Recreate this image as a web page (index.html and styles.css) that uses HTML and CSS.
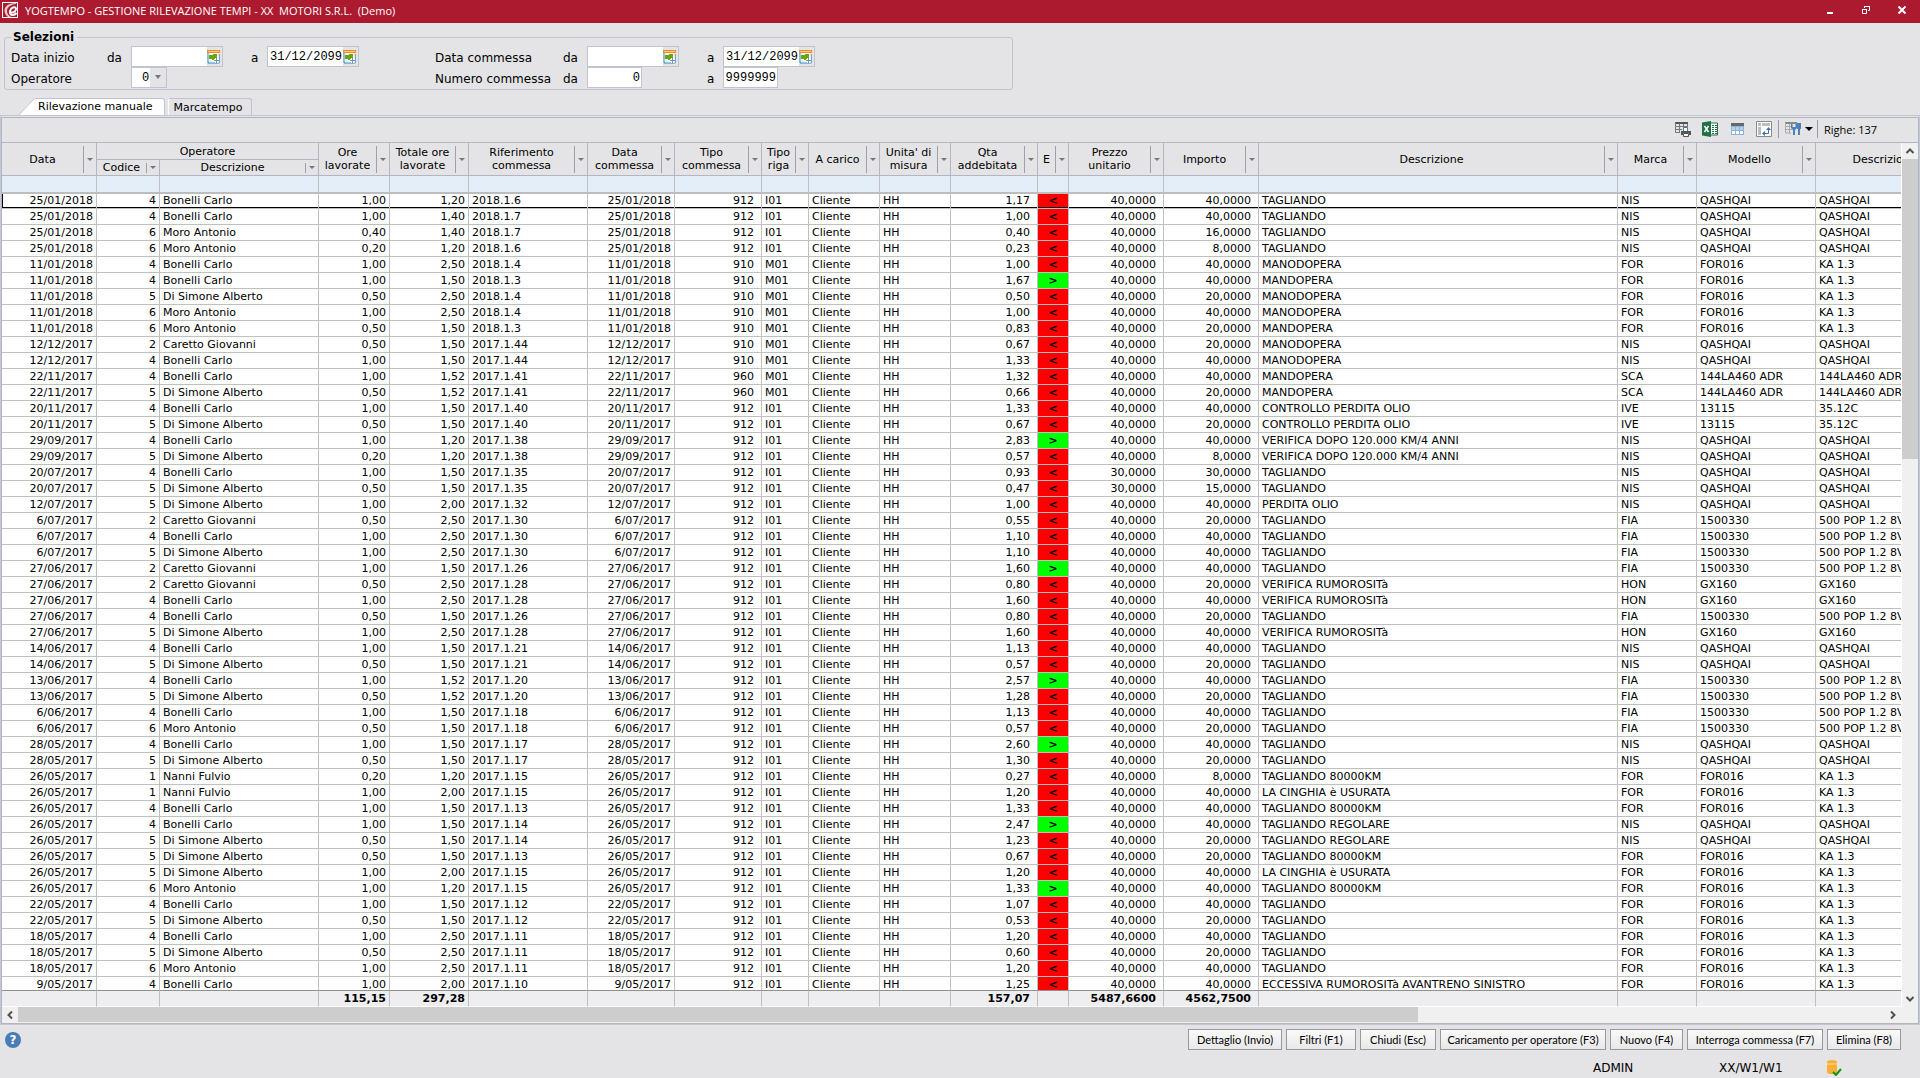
FILE: index.html
```html
<!DOCTYPE html>
<html lang="it">
<head>
    <meta charset="UTF-8">
    <meta name="viewport" content="width=device-width, initial-scale=1.0">
    <title>YOGTEMPO - Gestione rilevazione tempi</title>
    <link rel="stylesheet" href="styles.css">
</head>
<body>
    <svg class="defs" width="0" height="0" aria-hidden="true">
        <symbol id="calendar" viewBox="0 0 13 14">
            <path d="M1 3h10v10H1z" fill="#f4f9fd"/>
            <path d="M1 3v10h10" fill="none" stroke="#2f8fc4" stroke-width="1"/>
            <path d="M12.500 4v9H8" fill="none" stroke="#7fa3c4"/>
            <path d="M0 0h13v3H0z" fill="#f58a1f"/>
            <path d="M1 1h11v1H1z" fill="#fdc68c"/>
            <path d="M2 5h4v4H2zM6 4h4v4H6zM5 8h3v2H5z" fill="#6aa50c"/>
            <path d="M9.500 8v5M7 10.500h5" stroke="#fff" stroke-width="3"/>
            <path d="M9.500 8v5M7 10.500h5" stroke="#6b8fb5"/>
        </symbol>
        <symbol id="chevron" viewBox="0 0 16 16">
            <path d="M4.500 10L8 6.500l3.500 3.500" fill="none" stroke="#505050" stroke-width="2"/>
        </symbol>
    </svg>

    <header class="titlebar">
        <svg class="logo" viewBox="0 0 16 16">
            <path d="M0 0h16v16H0z" fill="#fff"/>
            <path d="M1 1h14v14H1z" fill="#a81c2e"/>
            <path d="M14 1C7 1 2.500 4 2.500 8.500c0 3 1.500 5 3.500 6.500h3C6.500 13.500 5 11.500 5 9c0-4 4-6.500 9-7z" fill="#e8c9cd"/>
            <path d="M8 10.500c4 .5 6.500-2 6-4-.5-1.800-3.500-1.500-5 .5-1.700 2.300-1.500 6 1.500 6 1.500 0 3-.8 4-2" fill="none" stroke="#fff" stroke-width="2"/>
        </svg>
        <h1>YOGTEMPO - GESTIONE RILEVAZIONE TEMPI - XX  MOTORI S.R.L.  (Demo)</h1>
        <div class="window-buttons">
            <button type="button" aria-label="Riduci"><svg viewBox="0 0 10 10"><path d="M2 7h6v2H2z" fill="#fff"/></svg></button>
            <button type="button" aria-label="Ripristina"><svg viewBox="0 0 10 10"><path d="M3.500 3V1.500h5v4H7M1.500 4.500h4v4h-4z" fill="none" stroke="#fff"/><path d="M3 1h6v1H3zM1 4h5v1H1z" fill="#fff"/></svg></button>
            <button type="button" aria-label="Chiudi"><svg viewBox="0 0 10 10"><path d="M1.500 1.500l7 7M8.500 1.500l-7 7" stroke="#fff" stroke-width="2"/></svg></button>
        </div>
    </header>

    <fieldset class="selezioni">
        <legend>Selezioni</legend>
        <div class="campi">
            <span>Data inizio</span>
            <label for="inizioDa">da</label>
            <div class="data"><input id="inizioDa" type="text"><button type="button" aria-label="Calendario"><svg><use href="#calendar"/></svg></button></div>
            <label for="inizioA">a</label>
            <div class="data"><input id="inizioA" type="text" value="31/12/2099"><button type="button" aria-label="Calendario"><svg><use href="#calendar"/></svg></button></div>
            <span>Data commessa</span>
            <label for="commessaDa">da</label>
            <div class="data"><input id="commessaDa" type="text"><button type="button" aria-label="Calendario"><svg><use href="#calendar"/></svg></button></div>
            <label for="commessaA">a</label>
            <div class="data"><input id="commessaA" type="text" value="31/12/2099"><button type="button" aria-label="Calendario"><svg><use href="#calendar"/></svg></button></div>

            <label class="largo" for="operatore">Operatore</label>
            <div class="combo"><select id="operatore"><option>0</option></select></div>
            <span class="vuoto"></span>
            <span>Numero commessa</span>
            <label for="numeroDa">da</label>
            <input class="numero" id="numeroDa" type="text" value="0">
            <label for="numeroA">a</label>
            <input class="numero" id="numeroA" type="text" value="9999999">
        </div>
    </fieldset>

    <nav class="tabs">
        <button type="button" class="tab active"><svg viewBox="0 0 18 18"><path d="M0 18L15 2q1-1.500 3-1.500V18z" fill="#fff"/><path d="M0 18L15 2q1-1.500 3-1.500" fill="none" stroke="#c2c3d2"/></svg><span>Rilevazione manuale</span></button>
        <button type="button" class="tab">Marcatempo</button>
    </nav>

    <main class="pagina">
        <section class="griglia">
            <div class="toolbar">
                <button type="button" aria-label="Stampa">
                    <svg viewBox="0 0 16 16"><path d="M0 1h13v2H0z" fill="#555"/><path d="M.5 1.500v10H5M.5 5.500h12M.5 8.500H7M4.500 3v9M8.500 3v4M12.500 3v3" fill="none" stroke="#777"/><path d="M8.500 6.500h4v4h-4z" fill="#fff" stroke="#4a78ab"/><path d="M6 10h10v4h-2v-2H8v2H6z" fill="#555"/><path d="M8.500 12.500h5v3h-5z" fill="#fff" stroke="#555"/></svg>
                </button>
                <button type="button" aria-label="Esporta in Excel">
                    <svg viewBox="0 0 16 16"><path d="M8 2h7.500v12H8z" fill="#fff" stroke="#1f7244"/><path d="M10 4h2v1h-2zM13 4h2v1h-2zM10 6h2v1h-2zM13 6h2v1h-2zM10 8h2v1h-2zM13 8h2v1h-2zM10 10h2v1h-2zM13 10h2v1h-2zM10 12h2v1h-2zM13 12h2v1h-2z" fill="#1f7244"/><path d="M0 1.500L9 0v16l-9-1.500z" fill="#1f7244"/><path d="M2.500 5l4 6M6.500 5l-4 6" stroke="#fff" stroke-width="1.500"/></svg>
                </button>
                <button type="button" aria-label="Tabella">
                    <svg viewBox="0 0 16 16"><path d="M2 2h13v12H2z" fill="#8db4d8"/><path d="M2 2h13v3H2z" fill="#666"/><path d="M3 6h3v3H3zM7 6h3v3H7zM11 6h3v3h-3zM3 10h3v3H3zM7 10h3v3H7zM11 10h3v3h-3z" fill="#fff"/><path d="M3 6h3v3H3zM7 6h3v3H7zM11 6h3v3h-3z" fill="#b5d2ec"/></svg>
                </button>
                <button type="button" aria-label="Pivot">
                    <svg viewBox="0 0 16 16"><path d="M.5 .5h15v15H.5z" fill="#fff" stroke="#8a8a8a"/><path d="M2 2h3v3H2zM6 2h8v3H6zM2 6h3v8H2z" fill="#bdbdbd"/><path d="M7 12.500h5.500V7" fill="none" stroke="#3a74b4"/><path d="M10 9l2.500-3L15 9zM9 10l-3 2.500L9 15z" fill="#3a74b4"/></svg>
                </button>
                <span class="sep"></span>
                <button type="button" class="menu" aria-label="Impostazioni">
                    <svg viewBox="0 0 16 16"><path d="M0 1h12v2H0z" fill="#888"/><path d="M.5 2v10H6M0 5.500h7M0 8.500h7M4.500 3v9" fill="none" stroke="#aaa"/><path d="M6 3v4l2 2v5h2V9l2-2V3h-1.500v3h-3V3z" fill="#4a80bb"/><path d="M12 2h4v6h-1v6h-2V8h-1z" fill="#4a80bb"/></svg>
                    <i class="freccia"></i>
                </button>
                <span class="sep"></span>
                <span class="righe">Righe: 137</span>
            </div>

            <div class="corpo">
                <div class="scorri">
                    <table>
                        <colgroup>
                            <col class="w95"><col class="w63"><col class="w159"><col class="w71"><col class="w79">
                            <col class="w119"><col class="w87"><col class="w87"><col class="w47"><col class="w71">
                            <col class="w71"><col class="w87"><col class="w31"><col class="w95"><col class="w95">
                            <col class="w359"><col class="w79"><col class="w119"><col class="w151">
                        </colgroup>
                        <thead>
                            <tr>
                                <th rowspan="2"><div class="th"><span>Data</span><button type="button" aria-label="Filtra"></button></div></th>
                                <th colspan="2" class="gruppo">Operatore</th>
                                <th rowspan="2"><div class="th"><span>Ore<br>lavorate</span><button type="button" aria-label="Filtra"></button></div></th>
                                <th rowspan="2"><div class="th"><span>Totale ore<br>lavorate</span><button type="button" aria-label="Filtra"></button></div></th>
                                <th rowspan="2"><div class="th"><span>Riferimento<br>commessa</span><button type="button" aria-label="Filtra"></button></div></th>
                                <th rowspan="2"><div class="th"><span>Data<br>commessa</span><button type="button" aria-label="Filtra"></button></div></th>
                                <th rowspan="2"><div class="th"><span>Tipo<br>commessa</span><button type="button" aria-label="Filtra"></button></div></th>
                                <th rowspan="2"><div class="th"><span>Tipo<br>riga</span><button type="button" aria-label="Filtra"></button></div></th>
                                <th rowspan="2"><div class="th"><span>A carico</span><button type="button" aria-label="Filtra"></button></div></th>
                                <th rowspan="2"><div class="th"><span>Unita' di<br>misura</span><button type="button" aria-label="Filtra"></button></div></th>
                                <th rowspan="2"><div class="th"><span>Qta<br>addebitata</span><button type="button" aria-label="Filtra"></button></div></th>
                                <th rowspan="2"><div class="th"><span>E</span><button type="button" aria-label="Filtra"></button></div></th>
                                <th rowspan="2"><div class="th"><span>Prezzo<br>unitario</span><button type="button" aria-label="Filtra"></button></div></th>
                                <th rowspan="2"><div class="th"><span>Importo</span><button type="button" aria-label="Filtra"></button></div></th>
                                <th rowspan="2"><div class="th"><span>Descrizione</span><button type="button" aria-label="Filtra"></button></div></th>
                                <th rowspan="2"><div class="th"><span>Marca</span><button type="button" aria-label="Filtra"></button></div></th>
                                <th rowspan="2"><div class="th"><span>Modello</span><button type="button" aria-label="Filtra"></button></div></th>
                                <th rowspan="2"><div class="th"><span>Descrizione</span><button type="button" aria-label="Filtra"></button></div></th>
                            </tr>
                            <tr>
                                <th><div class="th basso"><span>Codice</span><button type="button" aria-label="Filtra"></button></div></th>
                                <th><div class="th basso"><span>Descrizione</span><button type="button" aria-label="Filtra"></button></div></th>
                            </tr>
                            <tr class="filtri">
                                <td></td><td></td><td></td><td></td><td></td><td></td><td></td><td></td><td></td><td></td>
                                <td></td><td></td><td></td><td></td><td></td><td></td><td></td><td></td><td></td>
                            </tr>
                        </thead>
                        <tbody id="righe"></tbody>
                        <tfoot>
                            <tr>
                                <td></td><td></td><td></td>
                                <td class="num">115,15</td>
                                <td class="num">297,28</td>
                                <td></td><td></td><td></td><td></td><td></td><td></td>
                                <td class="num7">157,07</td>
                                <td></td>
                                <td class="num7">5487,6600</td>
                                <td class="num7">4562,7500</td>
                                <td></td><td></td><td></td><td></td>
                            </tr>
                        </tfoot>
                    </table>
                </div>
                <div class="barra-v">
                    <button type="button" aria-label="Su"><svg><use href="#chevron"/></svg></button>
                    <div class="binario"><div class="cursore"></div></div>
                    <button type="button" class="giu" aria-label="Giù"><svg><use href="#chevron"/></svg></button>
                </div>
            </div>
            <div class="barra-o">
                <button type="button" class="sinistra" aria-label="Sinistra"><svg><use href="#chevron"/></svg></button>
                <div class="binario"><div class="cursore"></div></div>
                <button type="button" class="destra" aria-label="Destra"><svg><use href="#chevron"/></svg></button>
            </div>
        </section>
    </main>

    <footer>
        <div class="comandi">
            <button type="button" class="aiuto" aria-label="Aiuto">?</button>
            <div class="bottoni">
                <button type="button">Dettaglio (Invio)</button>
                <button type="button">Filtri (F1)</button>
                <button type="button">Chiudi (Esc)</button>
                <button type="button">Caricamento per operatore (F3)</button>
                <button type="button">Nuovo (F4)</button>
                <button type="button">Interroga commessa (F7)</button>
                <button type="button">Elimina (F8)</button>
            </div>
        </div>
        <div class="stato">
            <span>ADMIN</span>
            <span>XX/W1/W1</span>
            <svg viewBox="0 0 16 16"><path d="M1 2q0-2 5-2t5 2v10q0 2-5 2t-5-2z" fill="#fbb034"/><path d="M1 4h10" stroke="#fde0a8"/><path d="M7 12l3 3 5-6" fill="none" stroke="#12960f" stroke-width="2"/></svg>
        </div>
    </footer>

    <script>
        const operatori = {
            1: "Nanni Fulvio",
            2: "Caretto Giovanni",
            4: "Bonelli Carlo",
            5: "Di Simone Alberto",
            6: "Moro Antonio"
        };
        const veicoli = {
            QASHQAI: ["NIS", "QASHQAI", "QASHQAI"],
            KA: ["FOR", "FOR016", "KA 1.3"],
            SCANIA: ["SCA", "144LA460 ADR", "144LA460 ADR"],
            IVECO: ["IVE", "13115", "35.12C"],
            FIAT: ["FIA", "1500330", "500 POP 1.2 8V"],
            HONDA: ["HON", "GX160", "GX160"]
        };
        // data, operatore, ore, totale, riferimento, tipo, riga, qta, esito, prezzo, importo, descrizione, veicolo
        const dati = `
25/01/2018|4|1,00|1,20|2018.1.6|912|I01|1,17|<|40|40|TAGLIANDO|QASHQAI
25/01/2018|4|1,00|1,40|2018.1.7|912|I01|1,00|<|40|40|TAGLIANDO|QASHQAI
25/01/2018|6|0,40|1,40|2018.1.7|912|I01|0,40|<|40|16|TAGLIANDO|QASHQAI
25/01/2018|6|0,20|1,20|2018.1.6|912|I01|0,23|<|40|8|TAGLIANDO|QASHQAI
11/01/2018|4|1,00|2,50|2018.1.4|910|M01|1,00|<|40|40|MANODOPERA|KA
11/01/2018|4|1,00|1,50|2018.1.3|910|M01|1,67|>|40|40|MANDOPERA|KA
11/01/2018|5|0,50|2,50|2018.1.4|910|M01|0,50|<|40|20|MANODOPERA|KA
11/01/2018|6|1,00|2,50|2018.1.4|910|M01|1,00|<|40|40|MANODOPERA|KA
11/01/2018|6|0,50|1,50|2018.1.3|910|M01|0,83|<|40|20|MANDOPERA|KA
12/12/2017|2|0,50|1,50|2017.1.44|910|M01|0,67|<|40|20|MANODOPERA|QASHQAI
12/12/2017|4|1,00|1,50|2017.1.44|910|M01|1,33|<|40|40|MANODOPERA|QASHQAI
22/11/2017|4|1,00|1,52|2017.1.41|960|M01|1,32|<|40|40|MANDOPERA|SCANIA
22/11/2017|5|0,50|1,52|2017.1.41|960|M01|0,66|<|40|20|MANDOPERA|SCANIA
20/11/2017|4|1,00|1,50|2017.1.40|912|I01|1,33|<|40|40|CONTROLLO PERDITA OLIO|IVECO
20/11/2017|5|0,50|1,50|2017.1.40|912|I01|0,67|<|40|20|CONTROLLO PERDITA OLIO|IVECO
29/09/2017|4|1,00|1,20|2017.1.38|912|I01|2,83|>|40|40|VERIFICA DOPO 120.000 KM/4 ANNI|QASHQAI
29/09/2017|5|0,20|1,20|2017.1.38|912|I01|0,57|<|40|8|VERIFICA DOPO 120.000 KM/4 ANNI|QASHQAI
20/07/2017|4|1,00|1,50|2017.1.35|912|I01|0,93|<|30|30|TAGLIANDO|QASHQAI
20/07/2017|5|0,50|1,50|2017.1.35|912|I01|0,47|<|30|15|TAGLIANDO|QASHQAI
12/07/2017|5|1,00|2,00|2017.1.32|912|I01|1,00|<|40|40|PERDITA OLIO|QASHQAI
6/07/2017|2|0,50|2,50|2017.1.30|912|I01|0,55|<|40|20|TAGLIANDO|FIAT
6/07/2017|4|1,00|2,50|2017.1.30|912|I01|1,10|<|40|40|TAGLIANDO|FIAT
6/07/2017|5|1,00|2,50|2017.1.30|912|I01|1,10|<|40|40|TAGLIANDO|FIAT
27/06/2017|2|1,00|1,50|2017.1.26|912|I01|1,60|>|40|40|TAGLIANDO|FIAT
27/06/2017|2|0,50|2,50|2017.1.28|912|I01|0,80|<|40|20|VERIFICA RUMOROSITà|HONDA
27/06/2017|4|1,00|2,50|2017.1.28|912|I01|1,60|<|40|40|VERIFICA RUMOROSITà|HONDA
27/06/2017|4|0,50|1,50|2017.1.26|912|I01|0,80|<|40|20|TAGLIANDO|FIAT
27/06/2017|5|1,00|2,50|2017.1.28|912|I01|1,60|<|40|40|VERIFICA RUMOROSITà|HONDA
14/06/2017|4|1,00|1,50|2017.1.21|912|I01|1,13|<|40|40|TAGLIANDO|QASHQAI
14/06/2017|5|0,50|1,50|2017.1.21|912|I01|0,57|<|40|20|TAGLIANDO|QASHQAI
13/06/2017|4|1,00|1,52|2017.1.20|912|I01|2,57|>|40|40|TAGLIANDO|FIAT
13/06/2017|5|0,50|1,52|2017.1.20|912|I01|1,28|<|40|20|TAGLIANDO|FIAT
6/06/2017|4|1,00|1,50|2017.1.18|912|I01|1,13|<|40|40|TAGLIANDO|FIAT
6/06/2017|6|0,50|1,50|2017.1.18|912|I01|0,57|<|40|20|TAGLIANDO|FIAT
28/05/2017|4|1,00|1,50|2017.1.17|912|I01|2,60|>|40|40|TAGLIANDO|QASHQAI
28/05/2017|5|0,50|1,50|2017.1.17|912|I01|1,30|<|40|20|TAGLIANDO|QASHQAI
26/05/2017|1|0,20|1,20|2017.1.15|912|I01|0,27|<|40|8|TAGLIANDO 80000KM|KA
26/05/2017|1|1,00|2,00|2017.1.15|912|I01|1,20|<|40|40|LA CINGHIA è USURATA|KA
26/05/2017|4|1,00|1,50|2017.1.13|912|I01|1,33|<|40|40|TAGLIANDO 80000KM|KA
26/05/2017|4|1,00|1,50|2017.1.14|912|I01|2,47|>|40|40|TAGLIANDO REGOLARE|QASHQAI
26/05/2017|5|0,50|1,50|2017.1.14|912|I01|1,23|<|40|20|TAGLIANDO REGOLARE|QASHQAI
26/05/2017|5|0,50|1,50|2017.1.13|912|I01|0,67|<|40|20|TAGLIANDO 80000KM|KA
26/05/2017|5|1,00|2,00|2017.1.15|912|I01|1,20|<|40|40|LA CINGHIA è USURATA|KA
26/05/2017|6|1,00|1,20|2017.1.15|912|I01|1,33|>|40|40|TAGLIANDO 80000KM|KA
22/05/2017|4|1,00|1,50|2017.1.12|912|I01|1,07|<|40|40|TAGLIANDO|KA
22/05/2017|5|0,50|1,50|2017.1.12|912|I01|0,53|<|40|20|TAGLIANDO|KA
18/05/2017|4|1,00|2,50|2017.1.11|912|I01|1,20|<|40|40|TAGLIANDO|KA
18/05/2017|5|0,50|2,50|2017.1.11|912|I01|0,60|<|40|20|TAGLIANDO|KA
18/05/2017|6|1,00|2,50|2017.1.11|912|I01|1,20|<|40|40|TAGLIANDO|KA
9/05/2017|4|1,00|2,00|2017.1.10|912|I01|1,25|<|40|40|ECCESSIVA RUMOROSITà AVANTRENO SINISTRO|KA`;

        const tbody = document.getElementById("righe");
        dati.trim().split("\n").forEach((riga, i) => {
            const [data, op, ore, totale, rif, tipo, tipoRiga, qta, esito, prezzo, importo, descr, veicolo] = riga.split("|");
            const celle = [
                [data, "num"], [op, "num"], [operatori[op], ""], [ore, "num"], [totale, "num"],
                [rif, ""], [data, "num"], [tipo, "num7"], [tipoRiga, ""], ["Cliente", ""], ["HH", ""],
                [qta, "num7"], [esito, esito === "<" ? "esito sotto" : "esito sopra"],
                [prezzo + ",0000", "num7"], [importo + ",0000", "num7"], [descr, ""],
                ...veicoli[veicolo].map(v => [v, ""])
            ];
            const tr = document.createElement("tr");
            if (i === 0) tr.className = "corrente";
            celle.forEach(([testo, classe]) => {
                const td = document.createElement("td");
                td.textContent = testo;
                if (classe) td.className = classe;
                tr.appendChild(td);
            });
            tbody.appendChild(tr);
        });
    </script>
</body>
</html>
```
FILE: styles.css
```css
* {
    margin: 0;
    padding: 0;
    box-sizing: border-box;
}
body {
    font-family: Verdana, "DejaVu Sans", sans-serif;
    font-size: 12px;
    color: #000;
    background-color: #e4e4e6;
    height: 100vh;
    display: flex;
    flex-direction: column;
    overflow: hidden;
}
button, input, select {
    font: inherit;
    color: inherit;
    border: none;
    border-radius: 0;
    background: none;
    outline: none;
}
svg {
    display: block;
}
.defs {
    position: absolute;
}

/* barra del titolo */
.titlebar {
    flex: none;
    display: flex;
    align-items: center;
    height: 23px;
    padding: 0 9px 3px 2px;
    background-color: #ac1a2f;
    color: #fff;
}
.logo {
    width: 16px;
    height: 16px;
    margin-right: 7px;
}
.titlebar h1 {
    flex: 1;
    font-family: "Segoe UI", "Open Sans", sans-serif;
    font-size: 11px;
    font-weight: normal;
    line-height: 18px;
    white-space: pre;
    padding-top: 2px;
}
.window-buttons {
    display: flex;
}
.window-buttons button {
    width: 36px;
    height: 20px;
    display: flex;
    align-items: center;
    justify-content: flex-end;
    padding-right: 4px;
}
.window-buttons svg {
    width: 10px;
    height: 10px;
}

/* selezioni */
.selezioni {
    flex: none;
    width: 1009px;
    max-width: 100%;
    margin: 7px 0 8px 4px;
    padding: 1px 0 1px 6px;
    border: 1px solid #c2c3d2;
    border-radius: 3px;
}
.selezioni legend {
    padding: 0 3px 0 2px;
    font-weight: bold;
    line-height: 15px;
}
.campi {
    display: grid;
    grid-template-columns: 96px 24px 120px 16px 168px 128px 24px 120px 16px 92px;
    grid-auto-rows: 21px;
    align-items: center;
}
.campi span, .campi label {
    padding-top: 2px;
}
.largo {
    grid-column: span 2;
}
.vuoto {
    grid-column: span 2;
}
.data, .combo {
    display: flex;
    height: 21px;
    border: 1px solid #c2c3d2;
    background-color: #fff;
}
.data {
    width: 92px;
}
.data input {
    width: 75px;
    padding-left: 2px;
}
.data input, .combo select, .numero {
    font-family: "Liberation Mono", monospace;
    font-size: 12px;
}
.data button {
    width: 15px;
    background-color: #e4e4e6;
}
.data svg {
    width: 13px;
    height: 14px;
}
.combo {
    width: 36px;
    position: relative;
}
.combo select {
    appearance: none;
    width: 34px;
    padding-left: 10px;
    background: linear-gradient(to right, #fff 18px, #e4e4e6 18px);
}
.combo::after {
    content: '';
    position: absolute;
    right: 5px;
    top: 7px;
    border: 3px solid transparent;
    border-top: 4px solid #777;
    border-bottom: none;
    pointer-events: none;
}
.numero {
    width: 55px;
    height: 21px;
    padding: 0 1px;
    border: 1px solid #c2c3d2;
    background-color: #fff;
    text-align: right;
}

/* schede */
.tabs {
    flex: none;
    display: flex;
    height: 17px;
    padding-left: 18px;
    font-size: 11px;
}
.tab {
    display: flex;
    align-items: center;
    height: 17px;
    margin-left: 3px;
    padding: 0 9px 0 5px;
    border: 1px solid #c2c3d2;
    border-left-color: #fff;
    border-bottom: none;
    border-radius: 3px 3px 0 0;
    line-height: 15px;
}
.tab.active {
    margin: 0;
    padding: 0;
    border: none;
}
.tab svg {
    width: 18px;
    height: 18px;
}
.tab span {
    height: 18px;
    padding: 0 11px 0 2px;
    border-top: 1px solid #c2c3d2;
    border-right: 1px solid #c2c3d2;
    border-radius: 0 3px 0 0;
    background-color: #fff;
}

/* griglia */
.pagina {
    flex: 1;
    min-height: 0;
    display: flex;
    padding-top: 1px;
    border: 1px solid #c4c6d8;
}
.griglia {
    flex: 1;
    min-width: 0;
    display: flex;
    flex-direction: column;
    border: 1px solid #b3b5c2;
}
.toolbar {
    flex: none;
    display: flex;
    align-items: center;
    justify-content: flex-end;
    height: 25px;
    padding: 0 41px 2px 0;
    border-bottom: 1px solid #b3b5c2;
}
.toolbar button {
    margin-right: 11px;
}
.toolbar svg {
    width: 16px;
    height: 16px;
}
.toolbar button:nth-of-type(4) {
    margin-right: 6px;
}
.toolbar .menu {
    display: flex;
    align-items: center;
    gap: 4px;
    margin: 0 4px 0 6px;
}
.freccia {
    border: 4px solid transparent;
    border-top-color: #000;
    border-bottom: none;
}
.sep {
    width: 1px;
    height: 18px;
    background-color: #9a9ba6;
}
.righe {
    font-family: "Segoe UI", "Open Sans", sans-serif;
    font-size: 11px;
    padding-left: 6px;
}
.corpo {
    flex: 1;
    min-height: 0;
    display: flex;
}
.scorri {
    flex: 1;
    min-width: 0;
    overflow: hidden;
    background-color: #fff;
}
table {
    width: 1965px;
    table-layout: fixed;
    border-collapse: separate;
    border-spacing: 0;
    font-size: 11px;
}
.w31 { width: 31px; }
.w47 { width: 47px; }
.w63 { width: 63px; }
.w71 { width: 71px; }
.w79 { width: 79px; }
.w87 { width: 87px; }
.w95 { width: 95px; }
.w119 { width: 119px; }
.w151 { width: 151px; }
.w159 { width: 159px; }
.w359 { width: 359px; }
th {
    height: 16px;
    border-right: 1px solid #b3b5c2;
    border-bottom: 1px solid #b3b5c2;
    background-color: #e4e4e6;
    font-weight: normal;
    line-height: 13px;
}
th.gruppo {
    height: 17px;
}
.th {
    display: flex;
    align-items: center;
    height: 32px;
}
.th span {
    flex: 1;
    text-align: center;
    white-space: nowrap;
}
.th button {
    flex: none;
    width: 13px;
    height: 27px;
    border-left: 1px solid #a0a0a8;
    display: flex;
    align-items: center;
    justify-content: center;
}
.th button::before {
    content: '';
    border: 3px solid transparent;
    border-top-color: #777;
    border-bottom: none;
}
.th.basso {
    height: 15px;
}
.th.basso button {
    height: 10px;
}
.filtri td {
    height: 18px;
    border-bottom: 2px solid #bdbdbf;
    background-color: #e3eef8;
}
td {
    height: 16px;
    padding: 0 3px;
    border-right: 1px solid #c0c0c0;
    border-bottom: 1px solid #c0c0c0;
    line-height: 13px;
    white-space: nowrap;
    overflow: hidden;
}
.num, .num7 {
    text-align: right;
}
.num7 {
    padding-right: 7px;
}
.esito {
    font-weight: bold;
    text-align: center;
}
.sotto {
    background-color: #ff0000;
}
.sopra {
    background-color: #00ff00;
}
.corrente td {
    height: 15px;
    padding-bottom: 1px;
    box-shadow: inset 0 -1px #000;
}
.corrente td:first-child {
    box-shadow: inset 1px -1px #000;
}
tfoot td {
    position: sticky;
    bottom: 0;
    height: 17px;
    border-top: 1px solid #909090;
    border-bottom-color: #fff;
    background-color: #eeeef0;
    font-weight: bold;
}

/* barre di scorrimento */
.barra-v, .barra-o {
    flex: none;
    display: flex;
    background-color: #f0f0f0;
}
.barra-v {
    flex-direction: column;
    width: 17px;
    border-left: 1px solid #fff;
}
.barra-o {
    height: 16px;
    padding-right: 17px;
}
.barra-v svg, .barra-o svg {
    width: 16px;
    height: 16px;
}
.binario {
    flex: 1;
}
.barra-v .cursore {
    height: 36%;
    background-color: #cdcdcd;
}
.barra-o .cursore {
    width: 75%;
    height: 15px;
    background-color: #cdcdcd;
}
.giu svg {
    transform: rotate(180deg);
}
.sinistra svg {
    transform: rotate(-90deg);
}
.destra svg {
    transform: rotate(90deg);
}

/* piede */
footer {
    flex: none;
    height: 53px;
    padding: 4px 19px 0 5px;
}
.comandi {
    display: flex;
    align-items: center;
    justify-content: space-between;
}
.aiuto {
    width: 16px;
    height: 16px;
    border-radius: 50%;
    background-color: #4a7db5;
    color: #fff;
    font-weight: bold;
    line-height: 16px;
}
.bottoni {
    display: grid;
    grid-template-columns: 94px 70px 76px 166px 73px 136px 74px;
    gap: 4px;
}
.bottoni button {
    height: 21px;
    border: 1px solid #98989e;
    background: linear-gradient(#fafafa, #e8e8ea);
    font-family: Lato, Arial, sans-serif;
    font-size: 11px;
    white-space: nowrap;
}
.stato {
    display: grid;
    grid-template-columns: 126px 107px 16px;
    justify-content: end;
    align-items: center;
    padding: 10px 59px 0 0;
}
.stato svg {
    width: 16px;
    height: 16px;
}
```
